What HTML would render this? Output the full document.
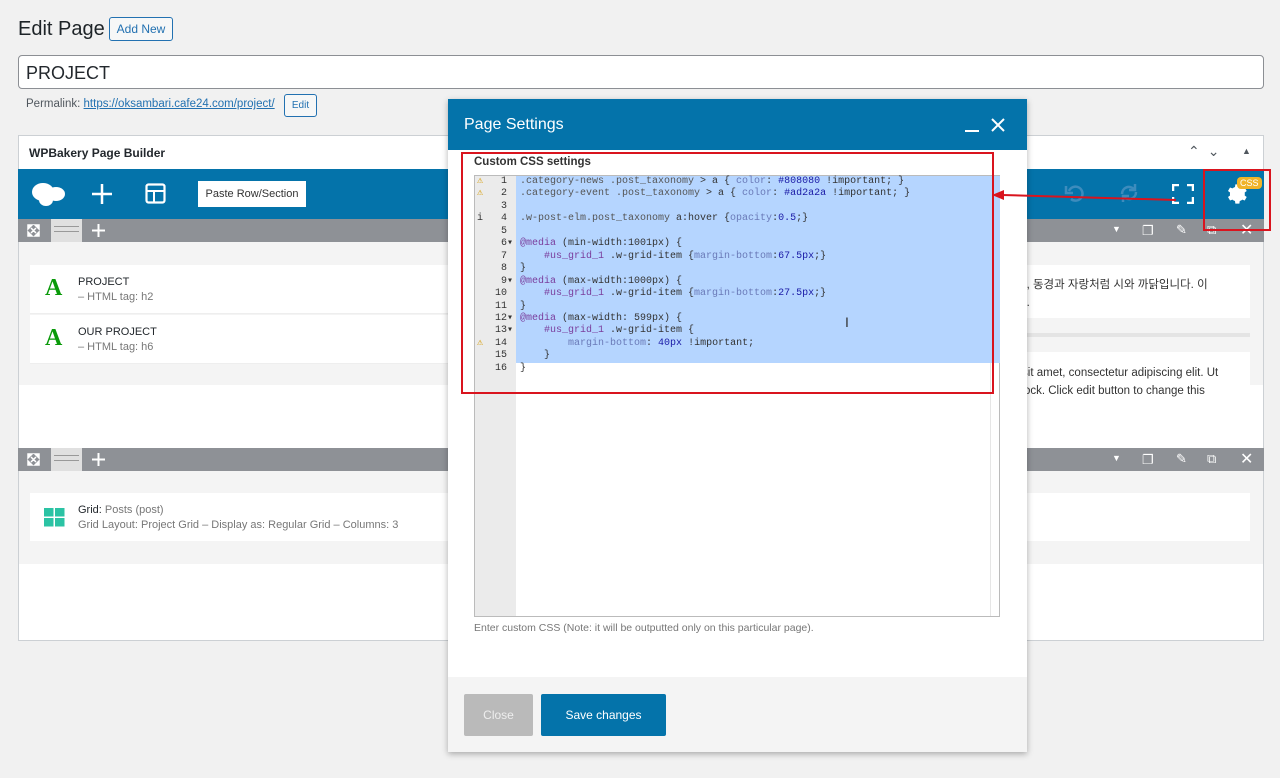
<!DOCTYPE html>
<html><head><meta charset="utf-8"><style>
*{box-sizing:border-box;margin:0;padding:0}
body{width:1280px;height:778px;background:#f1f1f1;font-family:"Liberation Sans","Noto Sans CJK KR",sans-serif;color:#23282d;position:relative;overflow:hidden}
.a{position:absolute}
.mono{font-family:"Liberation Mono",monospace;font-size:10px;line-height:12.45px;white-space:pre}
.gbar{background:#8e9196;height:23px}
</style></head><body>
<div class="a" style="left:18px;top:18px;font-size:20px;color:#1d2327">Edit Page</div>
<div class="a" style="left:109px;top:17px;width:64px;height:24px;border:1px solid #2271b1;border-radius:3px;color:#2271b1;font-size:12px;text-align:center;line-height:22px;background:#f6f7f7">Add New</div>
<div class="a" style="left:18px;top:55px;width:1246px;height:34px;border:1px solid #8c8f94;border-radius:4px;background:#fff;font-size:18px;padding:7px 7px;line-height:20px">PROJECT</div>
<div class="a" style="left:26px;top:98px;font-size:11.5px;color:#50575e">Permalink: <span style="color:#2271b1;text-decoration:underline">https://oksambari.cafe24.com/project/</span></div>
<div class="a" style="left:284px;top:94px;width:33px;height:23px;border:1px solid #2271b1;border-radius:3px;color:#2271b1;font-size:10px;text-align:center;line-height:21px;background:#f6f7f7">Edit</div>

<!-- builder -->
<div class="a" style="left:18px;top:135px;width:1246px;height:506px;background:#fff;border:1px solid #ccd0d4"></div>
<div class="a" style="left:29px;top:146px;font-size:12px;font-weight:bold;color:#23282d">WPBakery Page Builder</div>
<div class="a" style="left:1188px;top:143px;font-size:14px;color:#50575e;letter-spacing:8px">⌃⌄</div>
<div class="a" style="left:1242px;top:146px;font-size:9px;color:#50575e">▲</div>
<div class="a" style="left:18px;top:169px;width:1246px;height:50px;background:#0473aa"></div>
<svg class="a" style="left:30px;top:180px" width="36" height="28"><ellipse cx="13" cy="12" rx="11" ry="9" fill="#fff"/><ellipse cx="26" cy="14" rx="9" ry="7" fill="#fff"/><ellipse cx="16" cy="20" rx="7" ry="6" fill="#fff"/></svg>
<svg class="a" style="left:91px;top:183px" width="22" height="22"><path d="M11 1v20M1 11h20" stroke="#fff" stroke-width="2.5"/></svg>
<svg class="a" style="left:145px;top:183px" width="21" height="21"><rect x="1.5" y="1.5" width="18" height="18" rx="2" fill="none" stroke="#fff" stroke-width="2.2"/><line x1="2" y1="8" x2="19" y2="8" stroke="#fff" stroke-width="2"/><line x1="9" y1="8" x2="9" y2="19" stroke="#fff" stroke-width="2"/></svg>
<div class="a" style="left:198px;top:181px;width:108px;height:26px;background:#fff;font-size:11px;line-height:26px;text-align:center;color:#333">Paste Row/Section</div>
<svg class="a" style="left:1064px;top:182px" width="22" height="22"><path d="M5 9a7 7 0 1 1 2 8" fill="none" stroke="#3d8cbd" stroke-width="2.5"/><path d="M2 4v7h7" fill="none" stroke="#3d8cbd" stroke-width="2.5"/></svg>
<svg class="a" style="left:1118px;top:182px" width="22" height="22"><path d="M4 12a7 7 0 0 1 12-5M18 10a7 7 0 0 1-12 5" fill="none" stroke="#3d8cbd" stroke-width="2.5"/><path d="M17 2v6h-6M5 20v-6h6" fill="none" stroke="#3d8cbd" stroke-width="2.5"/></svg>
<svg class="a" style="left:1172px;top:184px" width="22" height="20"><path d="M1 7V1h6M15 1h6v6M21 13v6h-6M7 19H1v-6" fill="none" stroke="#fff" stroke-width="2.5"/></svg>
<svg class="a" style="left:1226px;top:183px" width="22" height="22" viewBox="0 0 24 24"><path fill="#fff" d="M12 8a4 4 0 100 8 4 4 0 000-8zm8.5 4c0-.6 0-1.1-.1-1.6l2.2-1.7-2.2-3.8-2.6 1a8 8 0 00-2.8-1.6L14.6 1.5h-4.4l-.4 2.8a8 8 0 00-2.8 1.6l-2.6-1-2.2 3.8 2.2 1.7c-.1.5-.1 1-.1 1.6s0 1.1.1 1.6l-2.2 1.7 2.2 3.8 2.6-1a8 8 0 002.8 1.6l.4 2.8h4.4l.4-2.8a8 8 0 002.8-1.6l2.6 1 2.2-3.8-2.2-1.7c.1-.5.1-1 .1-1.6z"/></svg>
<div class="a" style="left:1237px;top:177px;background:#f0b429;color:#fff;font-size:9px;border-radius:4px;padding:0 3px;line-height:12px">CSS</div>

<!-- row 1 -->
<div class="a gbar" style="left:18px;top:219px;width:1246px"></div>
<div class="a" style="left:51px;top:219px;width:31px;height:23px;background:#e0e0e0"></div>
<div class="a" style="left:54px;top:226px;width:25px;border-top:1px solid #999;border-bottom:1px solid #999;height:6px"></div>
<svg class="a" style="left:27px;top:224px" width="13" height="13"><path d="M1 1h4L1 5zM12 1v4L8 1zM1 12V8l4 4zM12 12H8l4-4zM4 4l5 5M9 4l-5 5" fill="#fff" stroke="#fff" stroke-width="1.5"/></svg>
<svg class="a" style="left:92px;top:224px" width="13" height="13"><path d="M6.5 0v13M0 6.5h13" stroke="#fff" stroke-width="2"/></svg>
<div class="a" style="left:1112px;top:224px;color:#fff;font-size:9px">▼</div>
<div class="a" style="left:1142px;top:223px;color:#fff;font-size:13px">❐</div>
<div class="a" style="left:1176px;top:222px;color:#fff;font-size:13px">✎</div>
<div class="a" style="left:1207px;top:222px;color:#fff;font-size:13px">⧉</div>
<div class="a" style="left:1240px;top:220px;color:#fff;font-size:16px">✕</div>
<div class="a" style="left:19px;top:242px;width:1244px;height:143px;background:#f4f4f4"></div>
<div class="a" style="left:30px;top:265px;width:418px;height:49px;background:#fff;border-bottom:1px solid #eee"></div>
<div class="a" style="left:30px;top:315px;width:418px;height:49px;background:#fff;border-bottom:1px solid #eee"></div>
<div class="a" style="left:45px;top:275px;color:#0a9a0a;font-size:24px;font-weight:bold;font-family:'Liberation Serif',serif">A</div>
<div class="a" style="left:45px;top:325px;color:#0a9a0a;font-size:24px;font-weight:bold;font-family:'Liberation Serif',serif">A</div>
<div class="a" style="left:78px;top:276px;font-size:11px;color:#23282d">PROJECT</div>
<div class="a" style="left:78px;top:291px;font-size:11px;color:#777">– HTML tag: h2</div>
<div class="a" style="left:78px;top:326px;font-size:11px;color:#23282d">OUR PROJECT</div>
<div class="a" style="left:78px;top:341px;font-size:11px;color:#777">– HTML tag: h6</div>
<div class="a" style="left:1027px;top:265px;width:223px;height:53px;background:#fff"></div>
<div class="a" style="left:1016px;top:276px;font-size:11.5px;color:#333;line-height:18px">루, 동경과 자랑처럼 시와 까닭입니다. 이<br>다.</div>
<div class="a" style="left:1027px;top:333px;width:223px;height:4px;background:#e4e4e4"></div>
<div class="a" style="left:1027px;top:352px;width:223px;height:71px;background:#fff"></div>
<div class="a" style="left:1015px;top:364px;font-size:11.5px;color:#333;line-height:18px">r sit amet, consectetur adipiscing elit. Ut<br>block. Click edit button to change this</div>

<!-- row 2 -->
<div class="a gbar" style="left:18px;top:448px;width:1246px"></div>
<div class="a" style="left:51px;top:448px;width:31px;height:23px;background:#e0e0e0"></div>
<div class="a" style="left:54px;top:455px;width:25px;border-top:1px solid #999;border-bottom:1px solid #999;height:6px"></div>
<svg class="a" style="left:27px;top:453px" width="13" height="13"><path d="M1 1h4L1 5zM12 1v4L8 1zM1 12V8l4 4zM12 12H8l4-4zM4 4l5 5M9 4l-5 5" fill="#fff" stroke="#fff" stroke-width="1.5"/></svg>
<svg class="a" style="left:92px;top:453px" width="13" height="13"><path d="M6.5 0v13M0 6.5h13" stroke="#fff" stroke-width="2"/></svg>
<div class="a" style="left:1112px;top:453px;color:#fff;font-size:9px">▼</div>
<div class="a" style="left:1142px;top:452px;color:#fff;font-size:13px">❐</div>
<div class="a" style="left:1176px;top:451px;color:#fff;font-size:13px">✎</div>
<div class="a" style="left:1207px;top:451px;color:#fff;font-size:13px">⧉</div>
<div class="a" style="left:1240px;top:449px;color:#fff;font-size:16px">✕</div>
<div class="a" style="left:19px;top:471px;width:1244px;height:93px;background:#f4f4f4"></div>
<div class="a" style="left:30px;top:493px;width:1220px;height:48px;background:#fff"></div>
<svg class="a" style="left:44px;top:508px" width="21" height="19"><rect x="0" y="0" width="9.5" height="8.5" fill="#2bc3a4"/><rect x="11" y="0" width="9.5" height="8.5" fill="#2bc3a4"/><rect x="0" y="10" width="9.5" height="8.5" fill="#2bc3a4"/><rect x="11" y="10" width="9.5" height="8.5" fill="#2bc3a4"/></svg>
<div class="a" style="left:78px;top:504px;font-size:11px;color:#23282d">Grid: <span style="color:#777">Posts (post)</span></div>
<div class="a" style="left:78px;top:519px;font-size:11px;color:#777">Grid Layout: Project Grid – Display as: Regular Grid – Columns: 3</div>

<!-- modal -->
<div class="a" style="left:448px;top:99px;width:579px;height:653px;background:#fff;box-shadow:0 2px 6px rgba(0,0,0,.3)"></div>
<div class="a" style="left:448px;top:99px;width:579px;height:51px;background:#0473aa"></div>
<div class="a" style="left:464px;top:116px;color:#fff;font-size:16px">Page Settings</div>
<div class="a" style="left:965px;top:130px;width:14px;height:2px;background:#fff"></div>
<svg class="a" style="left:991px;top:118px" width="14" height="14"><path d="M1 1l12 12M13 1L1 13" stroke="#fff" stroke-width="2"/></svg>
<div class="a" style="left:474px;top:156px;font-size:11.5px;font-weight:bold;color:#333">Custom CSS settings</div>
<div class="a" style="left:474px;top:175px;width:526px;height:442px;border:1px solid #bbb;background:#fff"></div>
<div class="a" style="left:475px;top:176px;width:41px;height:440px;background:#ebebeb"></div>
<div class="a" style="left:990px;top:176px;width:1px;height:440px;background:#e6e6e6"></div>
<div class="a" style="left:516px;top:176px;width:484px;height:187px;background:#b5d5ff"></div>
<div class="a mono" style="left:477px;top:176px;width:36px;text-align:right;color:#333"><span style="float:left;color:#d69a00">⚠</span>1 
<span style="float:left;color:#d69a00">⚠</span>2 
3 
<span style="float:left">i</span>4 
5 
6▾
7 
8 
9▾
10 
11 
12▾
13▾
<span style="float:left;color:#d69a00">⚠</span>14 
15 
16 </div>
<div class="a mono" style="left:520px;top:176px;color:#333"><span style="color:#555">.category-news .post_taxonomy</span> &gt; a { <span style="color:#6a7ab8">color</span>: <span style="color:#1a1aa6">#808080</span> !important; }
<span style="color:#555">.category-event .post_taxonomy</span> &gt; a { <span style="color:#6a7ab8">color</span>: <span style="color:#1a1aa6">#ad2a2a</span> !important; }

<span style="color:#555">.w-post-elm.post_taxonomy</span> a:hover {<span style="color:#6a7ab8">opacity</span>:<span style="color:#1a1aa6">0.5</span>;}

<span style="color:#7a3e9d">@media</span> (min-width:1001px) {
    <span style="color:#7a3e9d">#us_grid_1</span> .w-grid-item {<span style="color:#6a7ab8">margin-bottom</span>:<span style="color:#1a1aa6">67.5px</span>;}
}
<span style="color:#7a3e9d">@media</span> (max-width:1000px) {
    <span style="color:#7a3e9d">#us_grid_1</span> .w-grid-item {<span style="color:#6a7ab8">margin-bottom</span>:<span style="color:#1a1aa6">27.5px</span>;}
}
<span style="color:#7a3e9d">@media</span> (max-width: 599px) {
    <span style="color:#7a3e9d">#us_grid_1</span> .w-grid-item {
        <span style="color:#6a7ab8">margin-bottom</span>: <span style="color:#1a1aa6">40px</span> !important;
    }
}</div>
<div class="a" style="left:845px;top:314px;font-size:14px;color:#333">I</div>
<div class="a" style="left:474px;top:622px;font-size:10.5px;color:#777">Enter custom CSS (Note: it will be outputted only on this particular page).</div>
<div class="a" style="left:448px;top:677px;width:579px;height:75px;background:#f4f4f4"></div>
<div class="a" style="left:464px;top:694px;width:69px;height:42px;background:#bababa;border-radius:2px;color:#eee;font-size:12px;text-align:center;line-height:42px">Close</div>
<div class="a" style="left:541px;top:694px;width:125px;height:42px;background:#0473aa;border-radius:2px;color:#fff;font-size:12px;text-align:center;line-height:42px">Save changes</div>

<!-- annotations -->
<div class="a" style="left:461px;top:152px;width:533px;height:242px;border:2px solid #d9141e"></div>
<div class="a" style="left:1203px;top:169px;width:68px;height:62px;border:2px solid #d9141e"></div>
<svg class="a" style="left:990px;top:185px" width="200" height="20"><line x1="12" y1="10" x2="186" y2="15" stroke="#d9141e" stroke-width="2"/><polygon points="2,10 14,5 14,15" fill="#d9141e"/></svg>
</body></html>
